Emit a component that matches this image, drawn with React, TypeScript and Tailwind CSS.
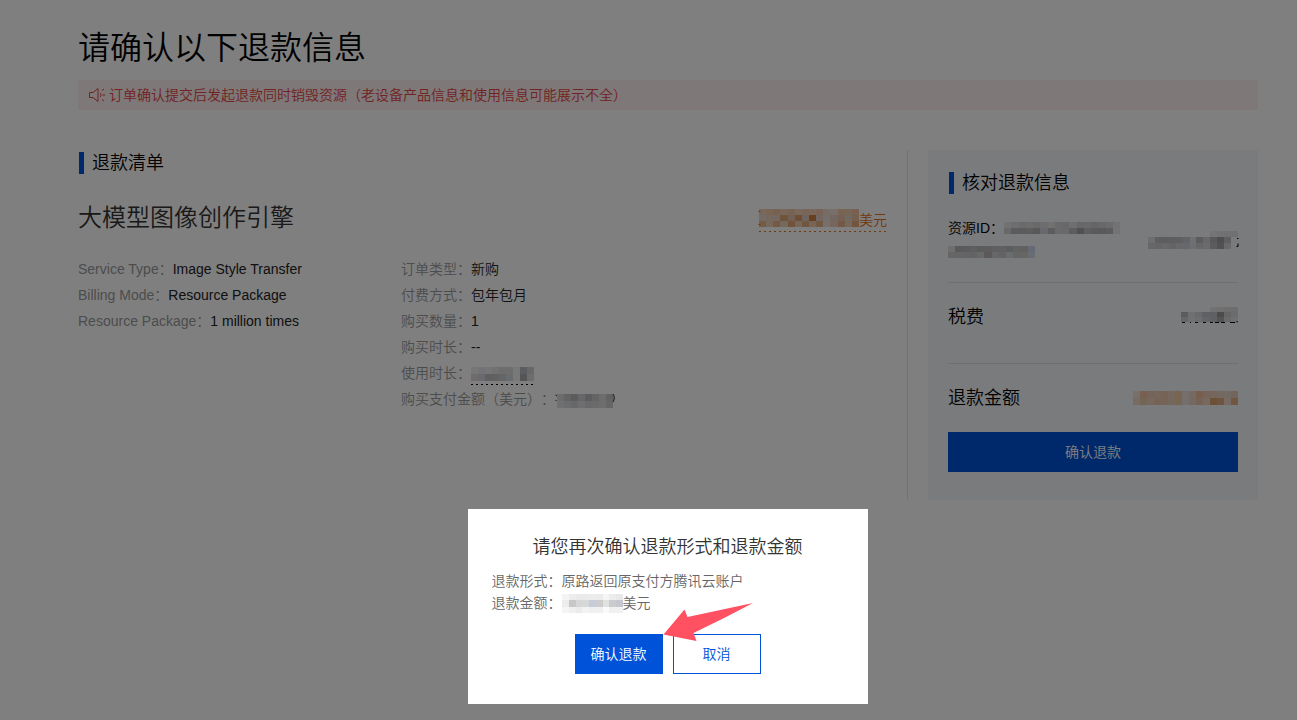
import React from "react";

type MosaicProps = { width: number; height: number; rows: string[]; traces?: string; className?: string };

/* Redacted value: each row lists its cells as space separated hex colours;
   traces holds the bits of the value that stick out from under the cells. */
function Mosaic({ width, height, rows, traces, className = "" }: MosaicProps) {
  const rowHeight = height / rows.length;
  return (
    <svg
      aria-hidden="true"
      width={width}
      height={height}
      viewBox={`0 0 ${width} ${height}`}
      shapeRendering="crispEdges"
      className={`shrink-0 overflow-visible ${className}`}
    >
      {rows.map((row, y) => {
        const cells = row.split(" ");
        const cellWidth = width / cells.length;
        return cells.map((fill, x) =>
          fill === "-" ? null : (
            <rect
              key={`${x}-${y}`}
              x={x * cellWidth}
              y={y * rowHeight}
              width={cellWidth}
              height={rowHeight}
              fill={`#${fill}`}
            />
          ),
        );
      })}
      {traces && <path d={traces} fill="none" stroke="currentColor" shapeRendering="auto" />}
    </svg>
  );
}

function SpeakerIcon() {
  return (
    <svg aria-hidden="true" width="16" height="16" viewBox="0 0 16 16" fill="none" stroke="currentColor" className="shrink-0">
      <path d="M.5 5.5h3.5l5-4v13l-5-4h-3.5z" />
      <path d="M11 6c1.4 1 1.4 3 0 4" />
      <path d="M13 3.5l2-1.5M13.5 8H16M13 12.5l2 1.5" />
    </svg>
  );
}

function SectionTitle({ children }: { children: React.ReactNode }) {
  return (
    <h2 className="ml-px flex items-center gap-2 text-lg leading-[26px] text-black">
      <span className="h-[22px] w-[5px] bg-[#0052d9]" />
      {children}
    </h2>
  );
}

function Field({ label, children }: { label: string; children: React.ReactNode }) {
  return (
    <div className="flex h-[26px] items-center">
      <dt className="text-[#999]">{label}：</dt>
      <dd className="flex items-center text-[#222]">{children}</dd>
    </div>
  );
}

function RefundList() {
  return (
    <section className="min-w-0 flex-1 border-r border-[#e5e5e5] pr-5">
      <SectionTitle>退款清单</SectionTitle>
      <div className="mt-6 flex items-center justify-between">
        <h3 className="text-2xl leading-9 text-[#333]">大模型图像创作引擎</h3>
        <div className="mt-1 text-[#e37318]">
          <div className="flex h-[22px] items-center">
            <Mosaic
              width={100}
              height={18}
              className="mb-1"
              traces="M-.5 2.5h2M-.5 15.5h2"
              rows={[
                "f0d0b8 f5c9a8 efc5a5 f4cdb0 f0c5a8 f5d2bb f0caaf f5cfb4 f1c7ac efd9d0 f0dcd4 f3c8a8 eecab0 f3c3a5",
                "e6d6ca ecd0bd e8d2c2 dca878 e2c2aa dc9f6a e0cbbc cf8040 e6d1c2 ecdcd5 e4cfc3 eac3a9 e7d3c6 e8c0a2",
                "efb98a ecd0b6 e8b48a efd1b9 e5a675 edceb5 e3ae83 efccb0 e5b085 efe0d8 edcdb6 e8b58d efd0b8 e6a978",
              ]}
            />
            <span>美元</span>
          </div>
          <div className="h-px bg-[repeating-linear-gradient(90deg,currentColor_0_2px,transparent_2px_5px)]" />
        </div>
      </div>
      <div className="mt-5 flex">
        <dl className="w-[323px]">
          <Field label="Service Type">Image Style Transfer</Field>
          <Field label="Billing Mode">Resource Package</Field>
          <Field label="Resource Package">1 million times</Field>
        </dl>
        <dl>
          <Field label="订单类型">新购</Field>
          <Field label="付费方式">包年包月</Field>
          <Field label="购买数量">1</Field>
          <Field label="购买时长">--</Field>
          <Field label="使用时长">
            <div className="pt-1.5">
              <Mosaic
                width={63}
                height={14}
                rows={[
                  "eeeeee e6e6ec eaeaea e2e2e4 dadada dcdcdc f0f0f0 b9bbc0 d0d0d0",
                  "e0d9d6 d5d5dd c0bfc1 c5c3c3 c9cacc d3d8df f2f2f2 ababad dadada",
                ]}
              />
              <div className="mt-[3px] h-px bg-[repeating-linear-gradient(90deg,black_0_2px,transparent_2px_5px)]" />
            </div>
          </Field>
          <Field label="购买支付金额（美元）">
            <Mosaic
              width={56}
              height={14}
              className="mt-1 ml-0.5"
              traces="M-1.5 1l1.5 1M-1.5 6.5h1M56 0c1.6 2 1.6 6 0 8"
              rows={[
                "d8d8d8 c4c6c6 b9b9bd cecfd2 b8b9be c9c9cc d9dad9 c5c5c5",
                "e0e0e0 d7d9dc d0d0d0 dcdcde cfd2d7 d6d6d9 dddddd cccccc",
              ]}
            />
          </Field>
        </dl>
      </div>
    </section>
  );
}

function Summary() {
  return (
    <aside className="flex w-[330px] shrink-0 flex-col bg-[#f5f7fa] p-5">
      <SectionTitle>核对退款信息</SectionTitle>
      <div className="flex items-center justify-between border-b border-[#dcdfe6] pt-5 pb-[18px] text-black">
        <div className="leading-6">
          <div className="flex h-6 items-center">
            资源ID：
            <Mosaic
              width={116}
              height={12}
              rows={[
                "e4e4e7 dcdde0 d3d4d7 dadbdd d2d2d4 dadbe0 e4e2df d5d5d7 cfd0d5 dedee2 cfcfd2 d3d3d6 cacace d0d0d4 d9d9dc e6e6ed",
                "d0d0d4 b7b7bb b6b5b8 bbbbbd b0b0b3 d2d3d6 b8b9bc d5d5d9 d4d2d2 b9bac0 a0a0a2 bdbcbd b3b4ba b1b2b8 b9b8bb e6e6ed",
              ]}
            />
          </div>
          <div className="flex h-6 items-center">
            <Mosaic
              width={87}
              height={12}
              rows={[
                "dedee0 b5b5b9 b3b6b9 bdbcbf b4b7bb bababb bbbfc5 c1c0c1 b9bbc0 c5c4c3 c3c1bd cad5e8",
                "cfcccd cacbcd c8c9cc c3c6cb d3d3d5 b6b3b3 cecfd2 c7c7ca d5d8dc c8cace d2cdc5 d0d9e8",
              ]}
            />
          </div>
        </div>
        <Mosaic
          width={90}
          height={18}
          traces="M89 7.5h1.500M88.500 15.500h1.500v-3"
          rows={[
            "- - - - - - - - - e8e9ec e4e5e7 dfe0e2 e2e3e5",
            "dddde1 bdbdc1 b9babe bcbcc0 bebec2 c6c8d3 e0e1e5 b9b9bc d1d1d4 b2b2b4 9c9ca0 bdbdc2 -",
            "ceced2 cacacf d0d0d5 c9c9ce d0d1d6 cfd0d8 dedfe4 cdced2 d5d6da b8b8ba a3a3a7 d3d3d7 -",
          ]}
        />
      </div>
      <div className="flex h-[81px] items-start justify-between border-b border-[#dcdfe6] pt-5 text-lg leading-7 text-black">
        税费
        <Mosaic
          width={57}
          height={15}
          className="mt-1"
          traces="M1 15.500h3M9 15.500h1M14 15.500h3M22 15.500h3M29 15.500h3M34 15.500h4M40 15.500h4M49 15.500h5M56 14v1.500"
          rows={[
            "- - - - e4e5e7 e0e1e3 dcdddf dadbdd",
            "bbb9ba dfe0e3 d3d4d6 bec0c9 c0c0c4 979799 cbcbcd d8d9db",
            "d0cecf e2e3e6 d9dadd c7c8d0 c2c2c6 a8a8ac d4d4d7 dfe0e2",
          ]}
        />
      </div>
      <div className="flex items-center justify-between pt-5 text-lg leading-7 text-black">
        退款金额
        <Mosaic
          width={105}
          height={14}
          rows={[
            "efe1d7 f0c0a0 ebc9b6 eccab4 f0c4a7 eccfbe f1ca9e e8ddda edd3c8 f0bc9b ecc9b7 eccbb5 e8d0c3 e9d4c9 e8cbb9",
            "eed8c9 e8c9ac edd0ba e9c6ad ebc8ac e9ceb8 efcba0 e9ddd8 ead1c2 e6c5aa eed2be d9a070 dcab85 edd5c5 e3ae83",
          ]}
        />
      </div>
      <button type="button" className="mt-5 h-10 bg-[#0052d9] text-white">确认退款</button>
    </aside>
  );
}

function ConfirmDialog() {
  return (
    <div
      role="dialog"
      aria-modal="true"
      aria-labelledby="confirm-title"
      className="w-[400px] bg-white px-6 pt-6 pb-[30px] text-[#666]"
    >
      <h2 id="confirm-title" className="text-center text-lg leading-[29px] text-[#333]">
        请您再次确认退款形式和退款金额
      </h2>
      <div className="mt-2 leading-[22px]">
        <p>退款形式：原路返回原支付方腾讯云账户</p>
        <p className="flex items-center">
          退款金额：
          <Mosaic
            width={61}
            height={19}
            rows={[
              "f4f4f4 ededed eaeaea eaeaea ececec ebebeb f5f5f5 ececec e8e8e8",
              "ececec c9c6c8 d6d6d6 d6d9d8 c6ccda cdcdcd dfe2df cbcbcd c5c6d0",
              "f5f5f5 f0f0f0 ebebeb f3f3f3 f0f0f0 f0f0f0 fafafa f0f0f0 f1f1f1",
            ]}
          />
          美元
        </p>
      </div>
      <div className="relative mt-5 flex justify-center gap-2.5">
        <button type="button" className="h-10 w-[88px] bg-[#0052d9] text-white">确认退款</button>
        <button type="button" className="h-10 w-[88px] border border-[#0052d9] bg-white text-[#0052d9]">取消</button>
        <svg
          aria-hidden="true"
          width="90"
          height="40"
          viewBox="0 0 90 40"
          className="pointer-events-none absolute bottom-full left-1/2 -mb-2 -ml-1 overflow-visible"
        >
          <path d="M-.5 32.5L20.5 7.5L23.5 15L89 1Q61 16 29.500 31L32.500 39Z" fill="#ff5162" />
        </svg>
      </div>
    </div>
  );
}

export default function App() {
  return (
    <div className="min-h-screen bg-white font-['Liberation_Sans','Noto_Sans_CJK_SC',sans-serif] text-sm font-[350] [text-spacing-trim:space-all]">
      <main className="pt-6 pr-[39px] pl-[78px]">
        <h1 className="text-[32px] leading-[48px] text-black">请确认以下退款信息</h1>
        <p className="mt-2 flex h-[30px] items-center gap-1 rounded-xs bg-[#fcf0f0] pl-[11px] text-[#e54545]">
          <SpeakerIcon />
          订单确认提交后发起退款同时销毁资源（老设备产品信息和使用信息可能展示不全）
        </p>
        <div className="mt-10 flex min-h-[350px] gap-5">
          <RefundList />
          <Summary />
        </div>
      </main>
      <div className="fixed inset-0 flex items-end justify-center bg-black/50 pb-4 pl-[38px]">
        <ConfirmDialog />
      </div>
    </div>
  );
}
